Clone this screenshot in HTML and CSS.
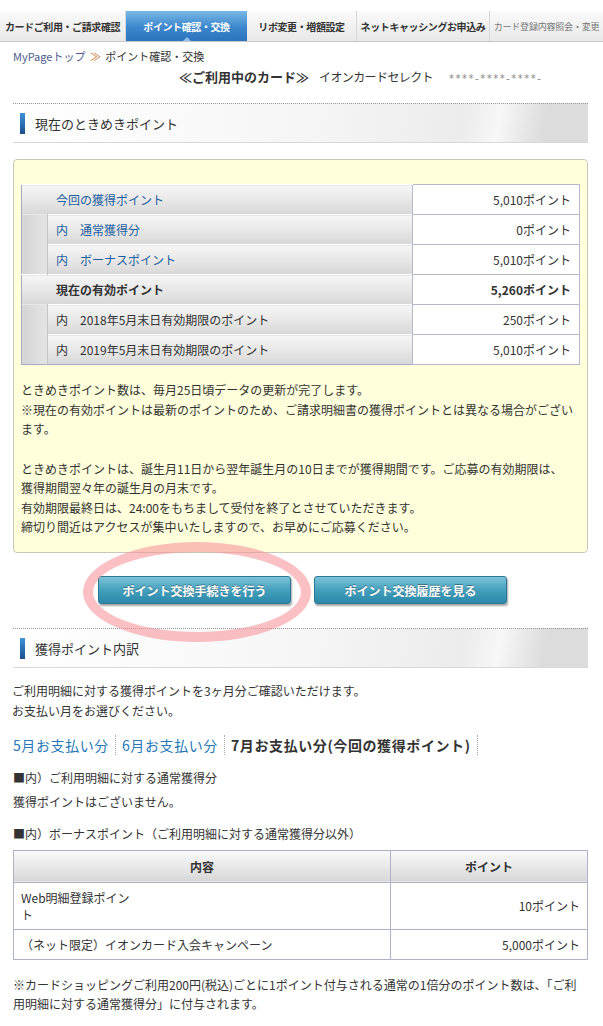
FILE: index.html
```html
<!DOCTYPE html>
<html lang="ja">
<head>
<meta charset="UTF-8">
<title>ポイント確認・交換</title>
<link rel="stylesheet" href="styles.css">
</head>
<body>

<div class="tabs">
  <div class="tab t1">カードご利用・ご請求確認</div>
  <div class="tab t2 active">ポイント確認・交換</div>
  <div class="tab t3">リボ変更・増額設定</div>
  <div class="tab t4">ネットキャッシングお申込み</div>
  <div class="tab t5 dim">カード登録内容照会・変更</div>
</div>

<div class="page">
  <div class="crumb"><a>MyPageトップ</a> <span class="arrow">≫</span> ポイント確認・交換</div>

  <div class="card-line">
    <span class="card-title">≪ご利用中のカード≫</span>
    <span class="card-name">イオンカードセレクト</span>
    <span class="card-no">****-****-****-</span>
  </div>

  <div class="sec-head"><span class="bar"></span>現在のときめきポイント</div>

  <div class="yellow-box">
    <table class="pt-table">
      <colgroup>
        <col class="c-strip">
        <col>
        <col class="c-val">
      </colgroup>
      <tr>
        <th colspan="2" class="blue">今回の獲得ポイント</th>
        <td>5,010ポイント</td>
      </tr>
      <tr>
        <th class="strip"></th>
        <th class="blue inner">内　通常獲得分</th>
        <td>0ポイント</td>
      </tr>
      <tr>
        <th class="strip"></th>
        <th class="blue inner">内　ボーナスポイント</th>
        <td>5,010ポイント</td>
      </tr>
      <tr>
        <th colspan="2" class="bold">現在の有効ポイント</th>
        <td class="bold">5,260ポイント</td>
      </tr>
      <tr>
        <th class="strip"></th>
        <th class="inner">内　2018年5月末日有効期限のポイント</th>
        <td>250ポイント</td>
      </tr>
      <tr>
        <th class="strip"></th>
        <th class="inner">内　2019年5月末日有効期限のポイント</th>
        <td>5,010ポイント</td>
      </tr>
    </table>

    <p class="note">ときめきポイント数は、毎月25日頃データの更新が完了します。<br>
    ※現在の有効ポイントは最新のポイントのため、ご請求明細書の獲得ポイントとは異なる場合がございます。</p>

    <p class="note">ときめきポイントは、誕生月11日から翌年誕生月の10日までが獲得期間です。ご応募の有効期限は、<br>獲得期間翌々年の誕生月の月末です。<br>
    有効期限最終日は、24:00をもちまして受付を終了とさせていただきます。<br>
    締切り間近はアクセスが集中いたしますので、お早めにご応募ください。</p>
  </div>

  <div class="btn-row">
    <a class="btn">ポイント交換手続きを行う</a>
    <a class="btn">ポイント交換履歴を見る</a>
    <div class="circle"></div>
  </div>

  <div class="sec-head second"><span class="bar"></span>獲得ポイント内訳</div>

  <p class="plain intro">ご利用明細に対する獲得ポイントを3ヶ月分ご確認いただけます。<br>お支払い月をお選びください。</p>

  <div class="months">
    <a class="month">5月お支払い分</a>
    <a class="month">6月お支払い分</a>
    <span class="month current">7月お支払い分(今回の獲得ポイント)</span>
  </div>

  <p class="plain sub">■内）ご利用明細に対する通常獲得分</p>
  <p class="plain none">獲得ポイントはございません。</p>

  <p class="plain sub2">■内）ボーナスポイント（ご利用明細に対する通常獲得分以外）</p>

  <table class="bonus">
    <tr>
      <th class="c1">内容</th>
      <th>ポイント</th>
    </tr>
    <tr class="tall">
      <td><span class="wrap">Web明細登録ポイント</span></td>
      <td class="num">10ポイント</td>
    </tr>
    <tr>
      <td>（ネット限定）イオンカード入会キャンペーン</td>
      <td class="num">5,000ポイント</td>
    </tr>
  </table>

  <p class="plain foot">※カードショッピングご利用200円(税込)ごとに1ポイント付与される通常の1倍分のポイント数は、「ご利<br>用明細に対する通常獲得分」に付与されます。</p>
</div>

</body>
</html>
```

FILE: styles.css
```css
body {
  margin: 0;
  padding: 0;
  background: #fff;
  color: #333;
  font-family: "Noto Sans CJK JP", "Noto Sans", sans-serif;
  font-size: 12px;
}

/* top tabs */
.tabs {
  display: flex;
  margin-top: 11px;
  height: 30px;
  border-bottom: 1px solid #c8c8c8;
}
.tab {
  display: flex;
  align-items: center;
  justify-content: center;
  flex-shrink: 0;
  white-space: nowrap;
  overflow: hidden;
  font-size: 10px;
  letter-spacing: -0.4px;
  font-weight: bold;
  color: #333;
  background: linear-gradient(#fafafa, #e8e8e8);
  border-right: 1px solid #d8d8d8;
  box-sizing: border-box;
}
.t1 { width: 126px; }
.t2 { width: 121px; }
.t3 { width: 110px; }
.t4 { width: 133px; }
.t5 {
  flex: 1;
  flex-shrink: 1;
  border-right: none;
}
.tab.dim {
  color: #777;
  font-weight: normal;
  font-size: 9px;
  letter-spacing: -0.2px;
}
.tab.active {
  position: relative;
  color: #fff;
  background: linear-gradient(#7ab8e6, #3b86cc 55%, #2c74bb);
  border-right: none;
}
.tab.active:after {
  content: "";
  position: absolute;
  bottom: 0;
  left: 50%;
  margin-left: -4px;
  border: 4px solid transparent;
  border-bottom-color: #8fc2ea;
}

.page {
  width: 575px;
  margin-left: 13px;
}

.crumb {
  margin-top: 7px;
  height: 14px;
  font-size: 11px;
  line-height: 14px;
  color: #333;
}
.crumb a { color: #4a5a8e; }
.crumb .arrow { color: #d07030; margin: 0 2px; }

.card-line {
  margin-top: 4px;
  height: 20px;
  padding-left: 166px;
  line-height: 20px;
  display: flex;
  align-items: baseline;
  overflow: hidden;
}
.card-title {
  font-size: 13px;
  font-weight: bold;
  color: #333;
}
.card-name {
  margin-left: 10px;
  font-size: 12px;
  letter-spacing: -0.6px;
}
.card-no {
  margin-left: 16px;
  font-family: "DejaVu Sans", sans-serif;
  font-size: 10px;
  letter-spacing: 1.5px;
  color: #888;
}

/* section headers */
.sec-head {
  margin-top: 16px;
  border-top: 1px dotted #999;
  height: 38px;
  display: flex;
  align-items: center;
  font-size: 13px;
  color: #333;
  background: linear-gradient(100deg, #fff 0%, #f6f6f6 50%, #ececec 78%, #f7f7f7 84%, #dcdcdc 92%);
  border-bottom: 1px solid #d8d8d8;
}
.sec-head .bar {
  width: 5px;
  height: 21px;
  margin: 0 10px 0 7px;
  background: linear-gradient(#3d92d8, #1a4f8f);
}
.sec-head.second { margin-top: 0; }

/* yellow point box */
.yellow-box {
  margin-top: 16px;
  background: #ffffdc;
  border: 1px solid #c8c8b8;
  border-radius: 4px;
  padding: 24px 7px 11px 7px;
  height: 394px;
  box-sizing: border-box;
}
.pt-table {
  width: 559px;
  table-layout: fixed;
  border-collapse: collapse;
  border: 1px solid #a8a8c0;
}
.pt-table .c-strip { width: 26px; }
.pt-table .c-val { width: 167px; }
.pt-table th,
.pt-table td {
  height: 29px;
  padding: 0 8px 0 34px;
  font-weight: normal;
  text-align: left;
  border-top: 1px solid #fff;
  background: linear-gradient(#f6f6f6, #e4e4e4 60%, #d8d8d8);
}
.pt-table th.strip {
  padding: 0;
  background: linear-gradient(90deg, #d4d4d4, #e4e4e4);
  border-top: none;
  border-right: 1px solid #c4c4c4;
}
.pt-table th.inner { padding-left: 8px; }
.pt-table td {
  padding: 0 8px;
  text-align: right;
  background: #fff;
  border: 1px solid #b8b8cc;
}
.pt-table .blue { color: #1f5fa0; }
.pt-table .bold { font-weight: bold; color: #333; }

.note {
  margin: 15px 0 0 0;
  line-height: 19.5px;
  color: #333;
}
.note + .note { margin-top: 20px; }

/* buttons */
.btn-row {
  position: relative;
  height: 75px;
  padding-top: 23px;
  box-sizing: border-box;
  display: flex;
  align-items: flex-start;
  gap: 23px;
  padding-left: 85px;
}
.btn {
  width: 191px;
  height: 26px;
  display: flex;
  align-items: center;
  justify-content: center;
  color: #fff;
  font-weight: bold;
  font-size: 12px;
  border-radius: 3px;
  background: linear-gradient(#7cc3d8, #45a0bd 50%, #2b88a8);
  border: 1px solid #2a7896;
  box-shadow: 1px 2px 2px rgba(0, 0, 0, 0.35);
  text-shadow: 0 -1px 0 rgba(0, 0, 0, 0.35);
}
.circle {
  position: absolute;
  left: 70px;
  top: -11px;
  width: 208px;
  height: 80px;
  border: 10px solid rgba(246, 150, 155, 0.6);
  border-radius: 50%;
  pointer-events: none;
  z-index: 2;
}

.plain {
  margin: 0;
  line-height: 19.5px;
  color: #333;
}
.intro {
  margin-top: 13px;
  margin-left: -1px;
}
.months {
  margin-top: 15px;
  display: flex;
  font-size: 14px;
  line-height: 20px;
  letter-spacing: 0.6px;
}
.month {
  padding: 0 6px;
  border-right: 1px dotted #aaa;
  color: #2677b7;
}
.month:first-child { padding-left: 0; }
.month.current {
  color: #333;
  font-weight: bold;
}
.sub { margin-top: 13px; }
.none { margin-top: 4px; }
.sub2 { margin-top: 13px; }

/* bonus table */
.bonus {
  margin-top: 6px;
  width: 575px;
  border-collapse: collapse;
  border: 1px solid #b0b0c8;
}
.bonus th {
  height: 29px;
  font-weight: bold;
  background: linear-gradient(#fafafa, #e2e2e2 70%, #d6d6d6);
  border: 1px solid #b0b0c8;
}
.bonus th.c1 { width: 374px; }
.bonus td {
  height: 29px;
  padding: 0 7px;
  border: 1px solid #b0b0c8;
}
.bonus tr.tall td { height: 46px; }
.bonus td.num { text-align: right; }
.bonus .wrap {
  display: block;
  width: 115px;
  line-height: 17px;
}

.foot {
  margin-top: 15px;
}
```
